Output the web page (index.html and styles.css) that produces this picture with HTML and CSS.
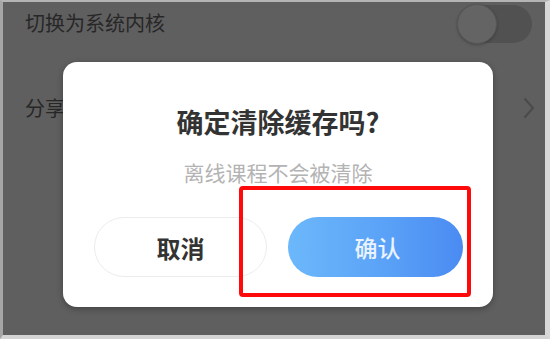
FILE: index.html
```html
<!DOCTYPE html>
<html lang="zh-CN">
<head>
<meta charset="utf-8">
<title>清除缓存</title>
<link rel="stylesheet" href="styles.css">
</head>
<body>
<div class="frame">
  <div class="row row-first">
    <span class="row-label">切换为系统内核</span>
    <span class="switch"><span class="knob"></span></span>
  </div>
  <div class="row row-second">
    <span class="row-label">分享</span>
    <svg class="chevron" width="12" height="24" viewBox="0 0 12 24"><polyline points="2,3 10,12 2,21" fill="none" stroke="#4a4a4a" stroke-width="2" stroke-linecap="round" stroke-linejoin="round"/></svg>
  </div>

  <div class="dialog">
    <div class="dialog-title">确定清除缓存吗?</div>
    <div class="dialog-sub">离线课程不会被清除</div>
    <div class="dialog-actions">
      <div class="btn btn-cancel">取消</div>
      <div class="btn btn-ok">确认</div>
    </div>
  </div>
  <div class="highlight"></div>
</div>
</body>
</html>
```
FILE: styles.css
```css
html, body {
  margin: 0;
  padding: 0;
  background: #e6e6e6;
}
body {
  width: 550px;
  height: 339px;
  overflow: hidden;
  font-family: "Noto Sans CJK SC", "Noto Sans", sans-serif;
}
.frame {
  position: relative;
  box-sizing: border-box;
  width: 550px;
  height: 339px;
  background: #5f5f5f;
  border-top: 2px solid #b4b4b4;
  border-left: 3px solid #a6a6a6;
  border-right: 5px solid #d8d8d8;
  border-bottom: 4px solid #d4d4d4;
}
.row {
  display: flex;
  align-items: center;
  justify-content: space-between;
  padding-left: 22px;
}
.row-first {
  height: 42px;
  padding-right: 13px;
}
.row-second {
  margin-top: 44px;
  height: 40px;
  padding-right: 10px;
}
.row-label {
  font-size: 20px;
  line-height: 26px;
  color: #272727;
}
.switch {
  display: flex;
  align-items: center;
  width: 75px;
  height: 38px;
  border-radius: 19px;
  background: #515151;
  margin-top: 2px;
}
.knob {
  box-sizing: border-box;
  width: 40px;
  height: 40px;
  border-radius: 50%;
  background: #646464;
  border: 1px solid #575757;
  box-shadow: 0 1px 3px rgba(0,0,0,0.25);
}
.dialog {
  position: absolute;
  top: 60px;
  left: 60px;
  width: 430px;
  height: 245px;
  box-sizing: border-box;
  background: #fff;
  border-radius: 14px;
  box-shadow: 0 2px 6px rgba(0,0,0,0.3);
  display: flex;
  flex-direction: column;
  align-items: center;
  padding-top: 44px;
}
.dialog-title {
  font-size: 27px;
  line-height: 32px;
  font-weight: 700;
  color: #333;
}
.dialog-sub {
  margin-top: 20px;
  font-size: 21px;
  line-height: 28px;
  color: #b3b3b3;
}
.dialog-actions {
  margin-top: 31px;
  display: flex;
  gap: 21px;
  padding-left: 1px;
}
.btn {
  box-sizing: border-box;
  height: 60px;
  border-radius: 30px;
  display: flex;
  align-items: center;
  justify-content: center;
}
.btn-cancel {
  width: 173px;
  border: 1.5px solid #ececec;
  font-size: 24px;
  font-weight: 700;
  color: #333;
}
.btn-ok {
  width: 175px;
  background: linear-gradient(90deg, #6cb8fb 0%, #5aa2f7 55%, #4a8bf2 100%);
  font-size: 23px;
  font-weight: 500;
  color: #eaf3ff;
  padding-left: 4px;
}
.highlight {
  position: absolute;
  top: 184px;
  left: 236px;
  width: 232px;
  height: 111px;
  box-sizing: border-box;
  border: 4px solid #ff0a0a;
  border-radius: 4px;
}
```
